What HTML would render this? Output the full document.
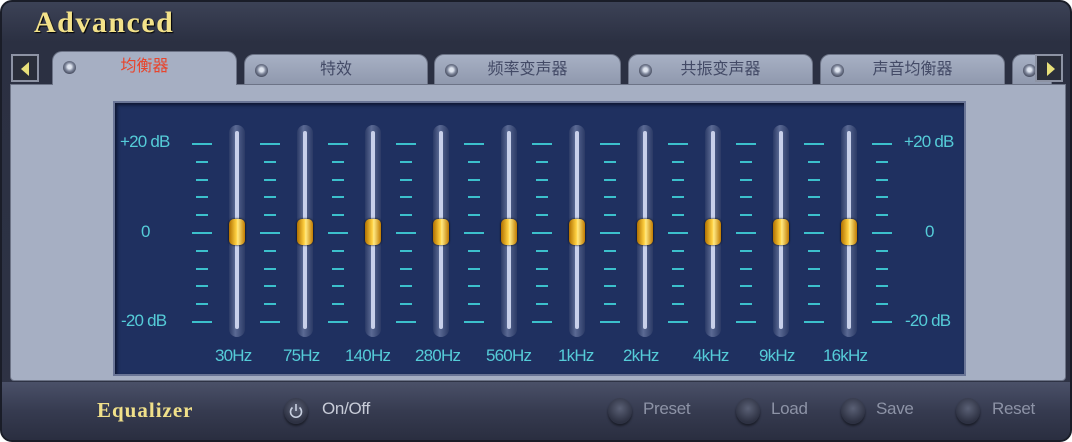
<!DOCTYPE html>
<html><head><meta charset="utf-8"><style>
*{margin:0;padding:0;box-sizing:border-box}
body{width:1072px;height:442px;overflow:hidden;background:#fff;font-family:"Liberation Sans","Noto Sans CJK SC",sans-serif}
#win{position:absolute;left:0;top:0;width:1072px;height:442px;border-radius:12px;background:linear-gradient(#3c4256,#2b3042 40px,#2e3345);border:2px solid #1a1d28}
.title{position:absolute;left:32px;top:4px;font-family:"Liberation Serif",serif;font-weight:bold;font-size:30px;letter-spacing:1.5px;color:#f3e28a;text-shadow:1px 1px 1px #000}
.arrow{position:absolute;top:52px;width:28px;height:28px;background:#2a2e3a;border:2px solid #8d93a4;}
.arrow:after{content:"";position:absolute;top:6px;border-top:7px solid transparent;border-bottom:7px solid transparent}
.al:after{left:8px;border-right:8px solid #e8e07a}
.ar:after{left:10px;border-left:8px solid #e8e07a}
.tab{position:absolute;top:52px;height:32px;border-radius:10px 10px 0 0;background:linear-gradient(#a7b0c4,#8f98ad);border:1px solid #6c7386;font-size:16px;color:#434a66;text-align:center;line-height:30px}
.tab.act{background:#a6afc3;color:#e8442c;height:34px;top:49px;border-bottom:none;z-index:2}
.tab i{position:absolute;left:10px;top:9px;width:13px;height:13px;border-radius:50%;background:radial-gradient(circle at 50% 45%,#dde3ee 20%,#7c8499 45%,#4c5265 70%)}
#panel{position:absolute;left:8px;top:82px;width:1056px;height:297px;background:#a6afc3;border:1px solid #6c7386;border-radius:0 0 4px 4px}
#eq{position:absolute;left:111px;top:99px;width:853px;height:275px;background:#1f3060;border:2px solid #6a7596;box-shadow:inset 2px 2px 3px #0d1530}
.lbl{position:absolute;color:#55ccd8;font-size:17px;letter-spacing:-0.8px}
.tick{position:absolute;height:2px;background:#3cc0cc}
.trk{position:absolute;top:123px;width:16px;height:212px;border-radius:8px;background:linear-gradient(90deg,#2b3a66,#5b6a94 40%,#2b3a66);}
.trk:after{content:"";position:absolute;left:6px;top:6px;width:4px;height:198px;background:#c8d0ea;border-radius:2px}
.knob{position:absolute;top:217px;width:16px;height:26px;border-radius:5px;background:linear-gradient(90deg,#b07000,#ffd040 45%,#ffe880 55%,#c07a00);z-index:2;box-shadow:0 0 2px #000}
#bot{position:absolute;left:0;top:380px;width:1068px;height:58px;background:linear-gradient(#4a5068,#363b50 50%,#2a2e40);border-radius:0 0 10px 10px}
.eqt{position:absolute;left:95px;top:396px;font-family:"Liberation Serif",serif;font-weight:bold;font-size:21px;letter-spacing:1px;color:#f0e08a}
.btn{position:absolute;top:396px;width:24px;height:26px;border-radius:50%;background:radial-gradient(circle at 50% 40%,#5a6075,#2d3142 70%);box-shadow:0 2px 2px #1a1d28}
.bt{position:absolute;top:397px;font-size:17px;letter-spacing:-0.3px;color:#8d93a6}
</style></head><body>
<div id="win">
<div class="title">Advanced</div>
<div class="arrow al" style="left:9px"></div>
<div class="tab act" style="left:50px;width:185px"><i></i>均衡器</div>
<div class="tab" style="left:242px;width:184px"><i></i>特效</div>
<div class="tab" style="left:432px;width:187px"><i></i>频率变声器</div>
<div class="tab" style="left:626px;width:185px"><i></i>共振变声器</div>
<div class="tab" style="left:818px;width:185px"><i></i>声音均衡器</div>
<div class="tab" style="left:1010px;width:40px"><i></i></div>
<div class="arrow ar" style="left:1033px"></div>
<div id="panel"></div>
<div id="eq"></div>
<div id="g"></div>
<div class="lbl" style="left:118px;top:130px">+20 dB</div>
<div class="lbl" style="left:139px;top:220px">0</div>
<div class="lbl" style="left:119px;top:309px">-20 dB</div>
<div class="lbl" style="left:902px;top:130px">+20 dB</div>
<div class="lbl" style="left:923px;top:220px">0</div>
<div class="lbl" style="left:903px;top:309px">-20 dB</div>
<div class="lbl" style="left:213px;top:344px">30Hz</div>
<div class="lbl" style="left:281px;top:344px">75Hz</div>
<div class="lbl" style="left:343px;top:344px">140Hz</div>
<div class="lbl" style="left:413px;top:344px">280Hz</div>
<div class="lbl" style="left:484px;top:344px">560Hz</div>
<div class="lbl" style="left:556px;top:344px">1kHz</div>
<div class="lbl" style="left:621px;top:344px">2kHz</div>
<div class="lbl" style="left:691px;top:344px">4kHz</div>
<div class="lbl" style="left:757px;top:344px">9kHz</div>
<div class="lbl" style="left:821px;top:344px">16kHz</div>
<div id="bot"></div>
<div class="eqt">Equalizer</div>
<div class="btn" style="left:282px"><svg width="24" height="26" viewBox="0 0 24 26"><path d="M8.5 9.5a5.5 5.5 0 1 0 7 0" fill="none" stroke="#c8d0e0" stroke-width="1.6"/><path d="M12 6v7" stroke="#c8d0e0" stroke-width="1.6"/></svg></div>
<div class="bt" style="left:320px;color:#c8ccd8">On/Off</div>
<div class="btn" style="left:606px"></div><div class="bt" style="left:641px">Preset</div>
<div class="btn" style="left:734px"></div><div class="bt" style="left:769px">Load</div>
<div class="btn" style="left:839px"></div><div class="bt" style="left:874px">Save</div>
<div class="btn" style="left:954px"></div><div class="bt" style="left:990px">Reset</div>
</div>
<script>
var g=document.getElementById('g'),h='';
for(var c=0;c<11;c++){var cx=200+c*68;
 for(var t=0;t<11;t++){var y=141+t*17.8;var w=(t==0||t==5||t==10)?20:12;
  h+='<div class="tick" style="left:'+(cx-w/2)+'px;top:'+Math.round(y)+'px;width:'+w+'px"></div>';}
 if(c<10){var sx=235+c*68;h+='<div class="trk" style="left:'+(sx-8)+'px"></div><div class="knob" style="left:'+(sx-8)+'px"></div>';}
}
g.innerHTML=h;
</script>
</body></html>
